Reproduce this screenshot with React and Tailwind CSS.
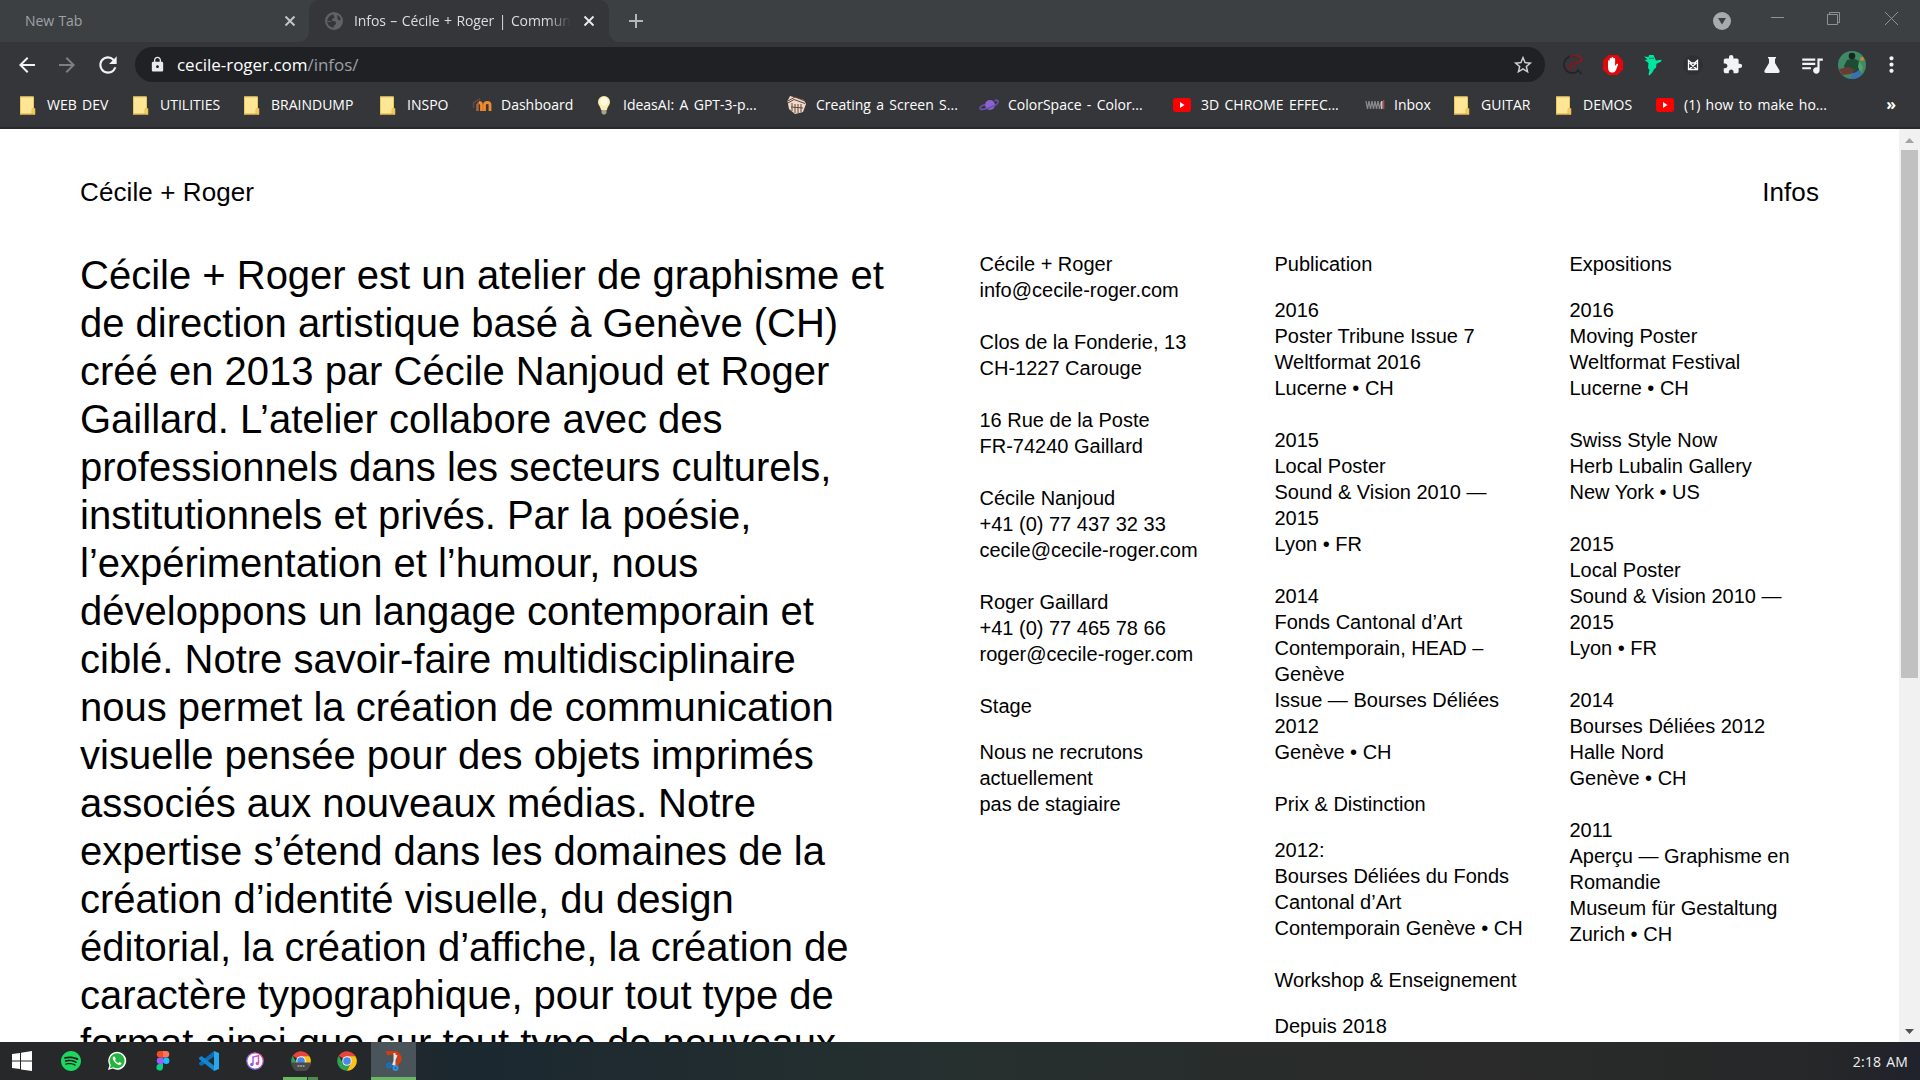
import { SiSpotify } from "react-icons/si";
import { MdLock, MdStarOutline, MdExtension, MdQueueMusic, MdMoreVert, MdArrowBack, MdArrowForward, MdRefresh } from "react-icons/md";

const Folder = () => (
  <svg width="16" height="19" viewBox="0 0 16 19">
    <path d="M0 0.5h13.5v12h1.5v6H0z" fill="#ffe596" />
    <path d="M0.5 18.500V1h13v11.500" stroke="#e8c860" fill="none" />
    <path d="M0 18h12" stroke="#d9a93a" />
    <path d="M12 18v-4.500q0-1 1.200-1H15v6z" fill="#f7d060" stroke="#d9a93a" strokeWidth="0.6" />
  </svg>
);
const YouTube = () => (
  <svg width="18" height="14" viewBox="0 0 18 14">
    <rect width="18" height="14" rx="3" fill="#f00" />
    <path d="M7 4l4.500 3L7 10z" fill="#fff" />
  </svg>
);
const Moodle = () => (
  <svg width="20" height="16" viewBox="0 0 20 16" fill="none">
    <path d="M1 6l7-4M1.500 6v5" stroke="#5a4a40" strokeWidth="1.600" />
    <path d="M5.500 14V7M5.500 7L8 5.500" stroke="#a9643a" strokeWidth="2.600" />
    <path d="M9.500 14V8q0-2.500-2.500-2.500M12.500 14V8q0-2.500 2.800-2.500T18 8v6" stroke="#f08a2c" strokeWidth="2.800" />
  </svg>
);
const Bulb = () => (
  <svg width="14" height="20" viewBox="0 0 14 20">
    <path d="M7 1a6 6 0 0 0-6 6c0 3 2.600 4.500 3 8h6c.4-3.500 3-5 3-8a6 6 0 0 0-6-6z" fill="#fdeeb0" />
    <ellipse cx="7" cy="6.500" rx="3.500" ry="4" fill="#fffbe8" />
    <path d="M4.500 15h5v3l-1.500 1.500h-2L4.500 18z" fill="#a9a294" />
  </svg>
);
const Building = () => (
  <svg width="20" height="20" viewBox="0 0 20 20">
    <path d="M3 1l14 4 2 4-3 8-8 2-6-5L0.500 6z" fill="#e9dccf" />
    <path d="M1 6l7-4 10 4M1 8l6-3.500 11 4M5 8v8M8 9v9M11 9v9M14 9v8M4 12l12 1" stroke="#6b4030" strokeWidth="1" fill="none" />
  </svg>
);
const Planet = () => (
  <svg width="20" height="14" viewBox="0 0 20 14">
    <circle cx="11" cy="7" r="5" fill="#8a63d2" />
    <path d="M6 6.500C-1 9 0 12 4.500 11.300 11 10.500 20 6 19.300 3.500 19 2 16.500 2.300 15.500 2.600" stroke="#6e50b0" strokeWidth="1.600" fill="none" />
  </svg>
);
const Wave = () => (
  <svg width="20" height="12" viewBox="0 0 20 12" fill="none" strokeWidth="1.300">
    <path d="M1 2l1.500 8L4 2l1.500 8L7 2l1.500 8L10 2l1.500 8L13 2l1.500 8L16 3" stroke="#87878b" />
    <path d="M16.800 2v8" stroke="#ddd" />
    <path d="M18.700 1v9" stroke="#c04545" />
  </svg>
);

const bookmarks = [
  [Folder, "WEB DEV", "w-[113px]"],
  [Folder, "UTILITIES", "w-[111px]"],
  [Folder, "BRAINDUMP", "w-[136px]"],
  [Folder, "INSPO", "w-[94px]"],
  [Moodle, "Dashboard", "w-[122px]"],
  [Bulb, "IdeasAI: A GPT-3-p...", "w-[193px]"],
  [Building, "Creating a Screen S...", "w-[192px]"],
  [Planet, "ColorSpace - Color...", "w-[193px]"],
  [YouTube, "3D CHROME EFFEC...", "w-[193px]"],
  [Wave, "Inbox", "w-[87px]"],
  [Folder, "GUITAR", "w-[102px]"],
  [Folder, "DEMOS", "w-[101px]"],
  [YouTube, "(1) how to make ho...", "w-[200px]"],
];

const Close = ({ color }) => (
  <svg width="12" height="12" viewBox="0 0 12 12" className="shrink-0">
    <path d="M1.500 1.500l9 9M10.500 1.500l-9 9" stroke={color} strokeWidth="1.900" />
  </svg>
);

function TabStrip() {
  return (
    <div className="flex h-[42px] bg-[#3c4043] text-[14px] tracking-[-0.1px] [word-spacing:1px]">
      <div className="flex w-[309px] items-center justify-between pl-[25px] pr-[13px] text-[#9fa3a7]">
        <span className="mb-[2px]">New Tab</span>
        <Close color="#c3c6c9" />
      </div>
      <div className="relative flex w-[300px] items-center rounded-t-[10px] bg-[#35363a] pl-[16px] pr-[14px] text-[#dcdde0]">
        <span className="absolute bottom-0 -left-[10px] size-[10px] bg-[radial-gradient(circle_at_0_0,transparent_9.500px,#35363a_10px)]" />
        <span className="absolute bottom-0 -right-[10px] size-[10px] bg-[radial-gradient(circle_at_100%_0,transparent_9.500px,#35363a_10px)]" />
        <svg width="18" height="18" viewBox="0 0 18 18" className="shrink-0">
          <circle cx="9" cy="9" r="9" fill="#5f6368" />
          <path d="M2 8.500C3 5 5 3 8.500 2.200 8 4 10 4 9.500 5.500 9 7 6.500 6.500 7 8.500c1 1 4 0 4 2.500 0 2-2 1.500-2.500 4.700C5 15.500 2.300 12.500 2 9.500L5 10l2-.5zM12 2.800c2 .9 3.500 3 3.900 5.200-2 .8-3.900-.5-3.400-2.300z" fill="#35363a" />
        </svg>
        <span className="mb-[2px] ml-[11px] w-[219px] whitespace-nowrap [mask-image:linear-gradient(to_right,#000_88%,transparent_99%)]">Infos – Cécile + Roger | Communi</span>
        <span className="ml-auto flex"><Close color="#e8eaed" /></span>
      </div>
      <svg width="16" height="16" viewBox="0 0 16 16" className="mt-[13px] ml-[19px]">
        <path d="M8 1v14M1 8h14" stroke="#b4b7ba" strokeWidth="2" />
      </svg>
      <div className="ml-auto flex text-[#9b9ea0]">
        <svg width="18" height="18" viewBox="0 0 18 18" className="mt-[12px] mr-[40px]">
          <circle cx="9" cy="9" r="9" fill="#a8abae" />
          <path d="M5 6h8l-4 6.500z" fill="#3c4043" />
        </svg>
        <svg width="13" height="14" viewBox="0 0 13 14" className="mt-[11px] mr-[43px]"><path d="M0 6.500h13" stroke="#8f9294" /></svg>
        <svg width="13" height="13" viewBox="0 0 13 13" className="mt-[12px] mr-[45px]" fill="none" stroke="#8f9294">
          <path d="M0.500 2.500h10v10h-10zM2.500 2.500v-2h10v10h-2" />
        </svg>
        <svg width="13" height="13" viewBox="0 0 13 13" className="mt-[12px] mr-[22px]"><path d="M0 0l13 13M13 0L0 13" stroke="#8f9294" /></svg>
      </div>
    </div>
  );
}

function Toolbar() {
  return (
    <div className="flex h-[45px] items-center">
      <div className="flex w-[135px] shrink-0 items-center gap-[16px] pl-[15px]">
        <MdArrowBack size={24} color="#f1f3f4" />
        <MdArrowForward size={24} color="#7d7f83" />
        <MdRefresh size={26} color="#f1f3f4" />
      </div>
      <div className="flex h-[35px] w-[1410px] shrink-0 items-center rounded-full bg-[#202124] pr-[11px] pl-[14px]">
        <MdLock size={17} color="#e8eaed" />
        <span className="ml-[11px] text-[17px] tracking-[-0.03px] text-white">cecile-roger.com<span className="text-[#9aa0a6]">/infos/</span></span>
        <MdStarOutline size={22} color="#d0d2d4" className="ml-auto" />
      </div>
      <div className="flex flex-1 items-center">
        <svg width="22" height="22" viewBox="0 0 22 22" fill="none" className="ml-[17px]">
          <path d="M13 2.500A8.500 8.500 0 1 0 16.500 16.500M15.500 15.500l4 4.500" stroke="#232327" strokeWidth="1.700" />
          <path d="M6 15v-4M9.300 15V8.500M12.500 15V6" stroke="#8c1218" strokeWidth="1.400" />
          <path d="M8 2.500q9-2.500 12 2 .5 3.500-5.500 4.500" stroke="#a01218" strokeWidth="1.400" />
        </svg>
        <svg width="22" height="22" viewBox="0 0 22 22" className="ml-[18px]">
          <path d="M6.500 1h9L21 6.500v9L15.500 21h-9L1 15.500v-9z" fill="#e1070b" />
          <path d="M6 13V7a.8.8 0 0 1 1.700 0v3V5a.9.9 0 0 1 1.800 0v5V4a.9.9 0 0 1 1.800 0v6V5a.9.9 0 0 1 1.800 0v7l1.500-2c1-.8 1.800 0 1.400.8L14 16c-1 2-2 2.600-4 2.600S6 17 6 13z" fill="#fff" />
        </svg>
        <svg width="20" height="22" viewBox="0 0 20 22" className="ml-[19px]">
          <path d="M1 2.500L5.500 3 6 1l4.500 0 1.500 3.500 1 2 5.500-.8-.5 2-4.500 2-.5 4-2 1.500-1.500 3-3 3.300-1-1 1-4.500-1.500-2 .5-5L1.500 6l3-.5z" fill="#00e5a0" />
          <path d="M6 4.300h5" stroke="#168060" strokeWidth="1" />
        </svg>
        <svg width="20" height="20" viewBox="0 0 20 20" className="ml-[20px]">
          <circle cx="10" cy="10" r="10" fill="#302f38" />
          <path d="M5.500 5.500L8.500 8h3l3-2.500v9h-9zM6.500 8l7 6M13.500 8l-7 6" stroke="#fff" strokeWidth="1.300" fill="none" />
        </svg>
        <MdExtension size={21} color="#f1f3f4" className="ml-[19px]" />
        <svg width="16" height="16" viewBox="0 0 16 16" className="ml-[21px]">
          <path d="M4 0h8v1.600h-1V6l4.500 7.500Q16 16 14 16H2Q0 16 .5 13.500L5 6V1.600H4z" fill="#f1f3f4" />
        </svg>
        <MdQueueMusic size={26} color="#f1f3f4" className="ml-[19px]" />
        <svg width="28" height="28" viewBox="0 0 28 28" className="ml-[13px] shrink-0 rounded-full">
          <rect width="28" height="28" fill="#3f8a66" />
          <path d="M6 15l3-6 4-1h4l4 2 1 8-4 4H8z" fill="#1f4a34" />
          <path d="M21 10l4 6-2 7-3-7z" fill="#56a372" />
          <circle cx="14" cy="5" r="3.300" fill="#14271f" />
          <path d="M1 18l10-2 6 3-4 4-9 1z" fill="#6b3a34" />
          <path d="M12 28l2-5 8-4 2 4-5 5z" fill="#3a72b0" />
          <circle cx="24" cy="8" r="2" fill="#c9872c" />
        </svg>
        <MdMoreVert size={25} color="#f1f3f4" className="ml-[13px] shrink-0" />
      </div>
    </div>
  );
}

function Bookmarks() {
  return (
    <div className="flex h-[42px] items-center border-b-2 border-[#29292c] pl-[18px] text-[14px] [word-spacing:1.7px] text-white">
      {bookmarks.map(([Icon, label, width]) => (
        <div key={label} className={`flex shrink-0 items-center gap-[9px] whitespace-nowrap pb-[4px] ${width}`}>
          <span className="flex w-[20px] justify-center"><Icon /></span>
          <span className="mb-[2px]">{label}</span>
        </div>
      ))}
      <span className="ml-auto pr-[24px] pb-[7px] text-[16px] font-bold">»</span>
    </div>
  );
}

const intro = [
  "Cécile + Roger est un atelier de graphisme et",
  "de direction artistique basé à Genève (CH)",
  "créé en 2013 par Cécile Nanjoud et Roger",
  "Gaillard. L’atelier collabore avec des",
  "professionnels dans les secteurs culturels,",
  "institutionnels et privés. Par la poésie,",
  "l’expérimentation et l’humour, nous",
  "développons un langage contemporain et",
  "ciblé. Notre savoir-faire multidisciplinaire",
  "nous permet la création de communication",
  "visuelle pensée pour des objets imprimés",
  "associés aux nouveaux médias. Notre",
  "expertise s’étend dans les domaines de la",
  "création d’identité visuelle, du design",
  "éditorial, la création d’affiche, la création de",
  "caractère typographique, pour tout type de",
  "format ainsi que sur tout type de nouveaux",
];

const columns = [
  [
    { items: [
      ["Cécile + Roger", "info@cecile-roger.com"],
      ["Clos de la Fonderie, 13", "CH-1227 Carouge"],
      ["16 Rue de la Poste", "FR-74240 Gaillard"],
      ["Cécile Nanjoud", "+41 (0) 77 437 32 33", "cecile@cecile-roger.com"],
      ["Roger Gaillard", "+41 (0) 77 465 78 66", "roger@cecile-roger.com"],
    ] },
    { title: "Stage", items: [["Nous ne recrutons", "actuellement", "pas de stagiaire"]] },
  ],
  [
    { title: "Publication", items: [
      ["2016", "Poster Tribune Issue 7", "Weltformat 2016", "Lucerne • CH"],
      ["2015", "Local Poster", "Sound & Vision 2010 —", "2015", "Lyon • FR"],
      ["2014", "Fonds Cantonal d’Art", "Contemporain, HEAD –", "Genève", "Issue — Bourses Déliées", "2012", "Genève • CH"],
    ] },
    { title: "Prix & Distinction", items: [["2012:", "Bourses Déliées du Fonds", "Cantonal d’Art", "Contemporain Genève • CH"]] },
    { title: "Workshop & Enseignement", items: [["Depuis 2018"]] },
  ],
  [
    { title: "Expositions", items: [
      ["2016", "Moving Poster", "Weltformat Festival", "Lucerne • CH"],
      ["Swiss Style Now", "Herb Lubalin Gallery", "New York • US"],
      ["2015", "Local Poster", "Sound & Vision 2010 —", "2015", "Lyon • FR"],
      ["2014", "Bourses Déliées 2012", "Halle Nord", "Genève • CH"],
      ["2011", "Aperçu — Graphisme en", "Romandie", "Museum für Gestaltung", "Zurich • CH"],
    ] },
  ],
];

function Page() {
  return (
    <div className="flex h-[913px] bg-white font-['Liberation_Sans',Arial,sans-serif] text-black">
      <main className="h-full flex-1 overflow-hidden pt-[47px] pl-[80px]">
        <header className="flex h-[32px] justify-between pr-[80px] text-[26px] leading-[32px] tracking-[0.1px]">
          <span>Cécile + Roger</span>
          <span>Infos</span>
        </header>
        <div className="mt-[43px] flex whitespace-nowrap">
          <p className="w-[899.5px] shrink-0 text-[40px] leading-[48px]">
            {intro.map((l) => <span key={l} className="block">{l}</span>)}
          </p>
          {columns.map((sections, c) => (
            <div key={c} className="w-[295px] shrink-0 text-[20px] leading-[26px]">
              {sections.map((s, i) => (
                <section key={i}>
                  {s.title && <h2 className="mb-[20px]">{s.title}</h2>}
                  {s.items.map((lines, j) => (
                    <p key={j} className="mb-[26px]">
                      {lines.map((l) => <span key={l} className="block">{l}</span>)}
                    </p>
                  ))}
                </section>
              ))}
            </div>
          ))}
        </div>
      </main>
      <div className="flex w-[21px] shrink-0 flex-col items-center justify-between bg-[#f1f1f1]">
        <svg width="21" height="21" viewBox="0 0 21 21"><path d="M6 14h9l-4.500-5z" fill="#a3a3a3" /></svg>
        <div className="mb-auto h-[528px] w-[17px] bg-[#c1c1c1]" />
        <svg width="21" height="21" viewBox="0 0 21 21"><path d="M6 8h9l-4.500 5z" fill="#505050" /></svg>
      </div>
    </div>
  );
}

const Chrome = () => (
  <>
    <path d="M10 10L1.700 4.800A9.800 9.800 0 0 1 18.500 5.200z" fill="#e8453c" />
    <path d="M10 5.200h8.500A9.800 9.800 0 0 1 9.600 19.800L14 12z" fill="#fbc116" />
    <path d="M1.700 4.800L6 12.300 10 14.600l3-1L9.600 19.800A9.800 9.800 0 0 1 1.700 4.800z" fill="#31a350" />
    <circle cx="10" cy="10" r="4.800" fill="#f1f1f1" />
    <circle cx="10" cy="10" r="3.800" fill="#4587f3" />
  </>
);

function Taskbar() {
  return (
    <div className="flex h-[38px] bg-[linear-gradient(90deg,#262829_0%,#262829_18%,#1b2830_24%,#26302f_50%,#2a2b2a_75%,#262728_95%,#20222c_100%)]">
      <div className="flex h-full w-[371px] shrink-0 items-center pl-[12px]">
        <svg width="20" height="20" viewBox="0 0 20 20" fill="#fff"><path d="M0 3l8-1.100V9.500H0zM9 1.700L20 0v9.500H9zM0 10.500h8v7.600L0 17zM9 10.500h11V20L9 18.400z" /></svg>
        <span className="ml-[29px] rounded-full bg-[#1e1e1e]"><SiSpotify size={20} color="#1ed760" /></span>
        <svg width="20" height="20" viewBox="0 0 20 20" className="ml-[26px]">
          <path d="M1 19l1.400-4.800a9 9 0 1 1 3.400 3.400z" fill="#fff" />
          <path d="M2.800 17.200l1-3.300a7.500 7.500 0 1 1 2.400 2.300z" fill="#25b43f" />
          <path d="M7 5.500c-1.600 0-1.500 2.400-.2 4.200 1.300 2 3.400 4 5.700 4.200 1.500 0 2.200-1.500 2-2l-2.100-1-.9 1.100c-1.500-.4-2.900-1.800-3.500-3.100l.8-1-.9-2.200z" fill="#fff" />
        </svg>
        <svg width="14" height="20" viewBox="0 0 14 20" className="ml-[29px]">
          <path d="M4 0h3v6.500H4A3.200 3.200 0 0 1 4 0z" fill="#f24e1e" />
          <path d="M7 0h3a3.200 3.200 0 0 1 0 6.500H7z" fill="#ff7262" />
          <path d="M4 6.500h3V13H4a3.200 3.200 0 0 1 0-6.500z" fill="#a259ff" />
          <circle cx="10.200" cy="9.800" r="3.200" fill="#1abcfe" />
          <path d="M4 13h3v3.500A3.300 3.300 0 1 1 4 13z" fill="#0acf83" />
        </svg>
        <svg width="20" height="20" viewBox="0 0 20 20" className="ml-[29px]">
          <path d="M15 0l5 2v16l-5 2z" fill="#2aa6ee" />
          <path d="M15 0v5.500L2.500 15 0 13.300V12z" fill="#0d6cb5" />
          <path d="M15 20v-5.500L2.500 5 0 6.700V8z" fill="#1485cf" />
        </svg>
        <svg width="18" height="18" viewBox="0 0 18 18" className="ml-[27px]">
          <defs>
            <linearGradient id="ring" gradientUnits="userSpaceOnUse" x1="0" y1="18" x2="18" y2="0"><stop offset="0" stopColor="#4a7df0" /><stop offset=".5" stopColor="#b05be0" /><stop offset="1" stopColor="#f74f7a" /></linearGradient>
          </defs>
          <circle cx="9" cy="9" r="8.200" fill="#fff" stroke="url(#ring)" strokeWidth="1.200" />
          <path d="M7 12.500V5l5.500-1.200v7.500" stroke="url(#ring)" strokeWidth="1.500" fill="none" />
          <circle cx="5.800" cy="12.500" r="1.700" fill="#9a5be0" /><circle cx="11.300" cy="11.500" r="1.700" fill="#d9559a" />
        </svg>
        <div className="relative ml-[19px] flex h-full w-[35px] justify-center pt-[9px]">
          <svg width="20" height="20" viewBox="0 0 20 20">
            <Chrome />
            <path d="M0.200 11.500h19.600A9.800 9.800 0 0 1 .2 11.500z" fill="#4a4a4a" />
            <path d="M6.500 15h7" stroke="#aaa" strokeWidth="1.500" strokeDasharray="2 .7" />
          </svg>
          <span className="absolute bottom-0 left-0 flex h-[3px] w-full"><span className="w-[24px] bg-[#69b75f]" /><span className="ml-px flex-1 bg-[#4d8b4c]" /></span>
        </div>
        <svg width="20" height="20" viewBox="0 0 20 20" className="ml-[19px]"><Chrome /></svg>
      </div>
      <div className="flex w-[45px] justify-center border-b-[3px] border-[#69b75f] bg-[#4a545b] pt-[9px]">
        <svg width="18" height="20" viewBox="0 0 18 20" fill="none">
          <path d="M1.500 2.500Q8-.5 12.500 3.500 17 9 10.500 13.500" stroke="#d13c10" strokeWidth="4.500" />
          <path d="M9.500 2v13M11.500 4L8 14" stroke="#e4e4e4" strokeWidth="2" />
          <circle cx="4" cy="14.500" r="2" stroke="#1274c4" strokeWidth="2" /><circle cx="10.500" cy="17" r="2" stroke="#2a92e4" strokeWidth="2" />
        </svg>
      </div>
      <span className="ml-auto self-center pr-[12px] text-[14px] tracking-[0.2px] [word-spacing:1px] text-[#f1f1f1]">2:18 AM</span>
    </div>
  );
}

export default function App() {
  return (
    <div className="flex h-[1080px] w-[1920px] flex-col overflow-hidden bg-[#35363a] font-['Open_Sans','Noto_Sans',sans-serif]">
      <TabStrip />
      <Toolbar />
      <Bookmarks />
      <Page />
      <Taskbar />
    </div>
  );
}
